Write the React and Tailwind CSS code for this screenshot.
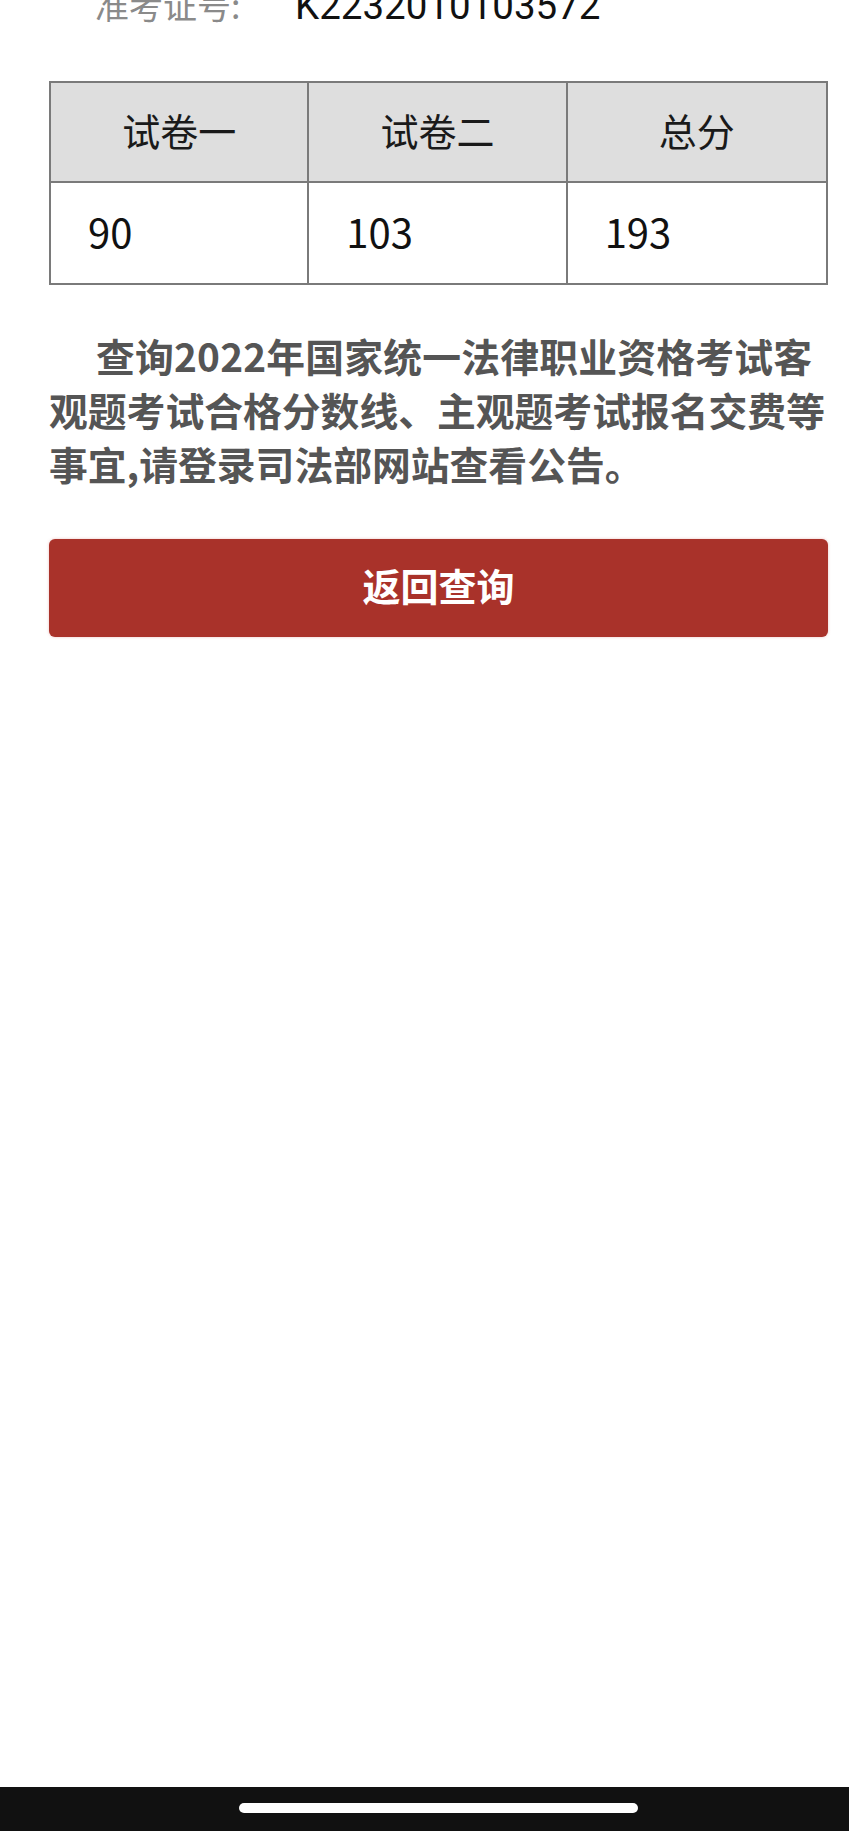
export default function App() {
  const cjk = { fontFamily: '"Noto Sans CJK SC", "Noto Sans", sans-serif' };
  return (
    <div className="w-[849px] h-[1831px] bg-white flex flex-col overflow-hidden" style={cjk}>
      <div className="flex-1 pl-[49px] pr-[21px]">
        <div className="-mt-[15px] flex items-baseline h-[40px] leading-[40px]">
          <span className="ml-[46px] text-[34px] text-[#8a8a8a] w-[200px]">准考证号:</span>
          <span className="text-[38.5px] text-[#111]" style={{ fontFamily: 'Roboto, "Liberation Sans", sans-serif' }}>K2232010103572</span>
        </div>
        <div className="mt-[56px] border-2 border-[#7a7a7a] grid grid-cols-3">
          <div className="h-[100px] pb-[6px] bg-[#dedede] border-r-2 border-b-2 border-[#7a7a7a] flex items-center justify-center text-[38px] text-[#1a1a1a]">试卷一</div>
          <div className="h-[100px] pb-[6px] bg-[#dedede] border-r-2 border-b-2 border-[#7a7a7a] flex items-center justify-center text-[38px] text-[#1a1a1a]">试卷二</div>
          <div className="h-[100px] pb-[6px] bg-[#dedede] border-b-2 border-[#7a7a7a] flex items-center justify-center text-[38px] text-[#1a1a1a]">总分</div>
          <div className="h-[100px] pb-[4px] border-r-2 border-[#7a7a7a] flex items-center pl-[37px] text-[40px] text-[#111]">90</div>
          <div className="h-[100px] pb-[4px] border-r-2 border-[#7a7a7a] flex items-center pl-[37px] text-[40px] text-[#111]">103</div>
          <div className="h-[100px] pb-[4px] flex items-center pl-[37px] text-[40px] text-[#111]">193</div>
        </div>
        <div className="mt-[43px] text-[38.8px] leading-[54px] font-bold text-[#555555] whitespace-nowrap">
          <div className="pl-[47px] tracking-[0.2px]">查询2022年国家统一法律职业资格考试客</div>
          <div>观题考试合格分数线、主观题考试报名交费等</div>
          <div>事宜,请登录司法部网站查看公告。</div>
        </div>
        <div className="mt-[49px] h-[98px] pb-[8px] rounded-[6px] bg-[#a9322a] shadow-[0_0_3px_rgba(200,80,80,0.35)] flex items-center justify-center text-white text-[38px] font-bold">
          返回查询
        </div>
      </div>
      <div className="h-[44px] bg-[#111111] pt-[16px]">
        <div className="ml-[239px] w-[399px] h-[10px] rounded-full bg-white"></div>
      </div>
    </div>
  );
}
